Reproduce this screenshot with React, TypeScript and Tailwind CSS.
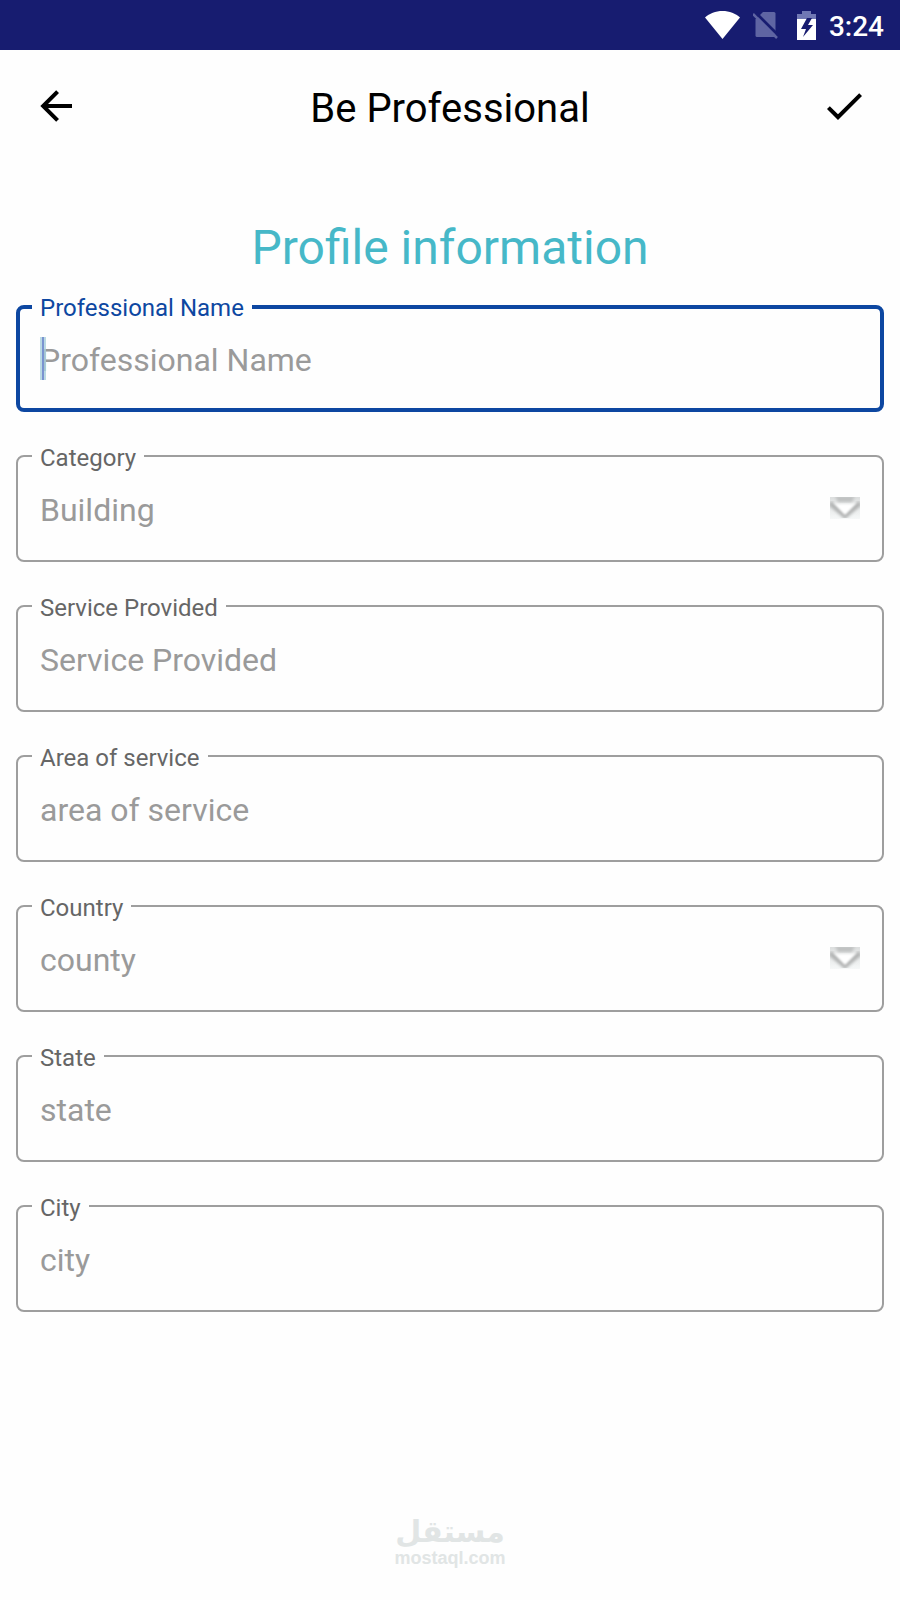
type FieldProps = {
  id: string;
  label: string;
  placeholder: string;
  focused?: boolean;
  options?: string[];
};

const fields: FieldProps[] = [
  { id: "name", label: "Professional Name", placeholder: "Professional Name", focused: true },
  { id: "category", label: "Category", placeholder: "Building", options: ["Building"] },
  { id: "service", label: "Service Provided", placeholder: "Service Provided" },
  { id: "area", label: "Area of service", placeholder: "area of service" },
  { id: "country", label: "Country", placeholder: "county", options: ["county"] },
  { id: "state", label: "State", placeholder: "state" },
  { id: "city", label: "City", placeholder: "city" },
];

function StatusBar() {
  return (
    <div className="flex h-[50px] items-center justify-end bg-[#171c70] px-4 text-white">
      <svg className="mr-3 h-7 w-9" viewBox="0 0 36 28" fill="currentColor">
        <path d="M17.500 28 0 6.500C4.500 2.500 10.500 0 17.500 0s13 2.500 17.500 6.500z" />
      </svg>
      <svg className="mr-4 h-7 w-7" viewBox="0 0 28 28">
        <path d="M10 1h11q1.500 0 1.500 1.500V26H4q-1.500 0-1.500-1.500V8.500z" fill="#5f65a3" />
        <path d="M3 2 25 24" stroke="#171c70" strokeWidth="3" />
        <path d="M0 3 24 27" stroke="#5f65a3" strokeWidth="2.500" />
      </svg>
      <svg className="mr-3 h-[29px] w-5" viewBox="-1 0 20 29">
        <path d="M4 0h9v3h5v5H-1V3h5z" fill="#7078b4" />
        <path d="M-1 8h19v21H-1z" fill="#fff" />
        <path d="M9 7 3 18h5L5 26 15 14h-5l4-7z" fill="#171c70" />
      </svg>
      <span className="pt-[3px] text-[28px] font-medium leading-8">3:24</span>
    </div>
  );
}

function Header() {
  return (
    <header className="flex items-start justify-between px-8 pt-8">
      <button type="button" aria-label="Back" className="cursor-pointer">
        <svg className="h-12 w-12" viewBox="0 0 24 24" fill="currentColor">
          <path d="M20 11v2H8l5.500 5.500-1.420 1.420L4.160 12l7.920-7.920L13.500 5.500 8 11h12z" />
        </svg>
      </button>
      <h1 className="text-[40px] leading-[54px]">Be Professional</h1>
      <button type="button" aria-label="Save" className="cursor-pointer">
        <svg className="h-12 w-12" viewBox="0 0 24 24" fill="currentColor">
          <path d="M21 7 9 19l-5.500-5.500 1.410-1.410L9 16.170 19.590 5.590 21 7z" />
        </svg>
      </button>
    </header>
  );
}

function DropdownArrow() {
  return (
    <svg className="pointer-events-none absolute right-[22px] top-[29px] h-[22px] w-[30px]" viewBox="0 0 30 22">
      <defs>
        <linearGradient id="arrowShade" x1="0" y1="0" x2="0" y2="1">
          <stop offset="0" stopColor="#dcdede" />
          <stop offset="1" stopColor="#f6f8f8" />
        </linearGradient>
        <filter id="arrowBlur">
          <feGaussianBlur stdDeviation="1.800" />
        </filter>
        <filter id="arrowSoft">
          <feGaussianBlur stdDeviation="0.800" />
        </filter>
      </defs>
      <rect width="30" height="22" fill="url(#arrowShade)" />
      <path d="M5-1h20l-3 6H8z" fill="#bfc1c1" filter="url(#arrowBlur)" />
      <path d="M0 6 15 19 30 6" fill="none" stroke="#b2b4b4" strokeWidth="5" filter="url(#arrowBlur)" />
      <path d="M3 5l6 2h12l6-2L15 18z" fill="#fff" filter="url(#arrowSoft)" />
    </svg>
  );
}

function Field({ id, label, placeholder, focused, options }: FieldProps) {
  return (
    <fieldset
      className={
        focused
          ? "h-[117px] min-w-0 rounded-lg border-4 border-[#0d47a1] px-5"
          : "h-[118px] min-w-0 rounded-lg border-2 border-[#9e9e9e] px-[22px]"
      }
    >
      <legend className={focused ? "-ml-2 px-2 pt-[2px] text-[#0d47a1]" : "-ml-2 px-2 pt-1 text-[#666]"}>
        <label htmlFor={id} className={focused ? "block text-2xl leading-[22px]" : "block text-2xl leading-5"}>
          {label}
        </label>
      </legend>
      <div
        className={
          options ? "relative -mx-[22px] px-[22px] pt-[22px]" : focused ? "relative pt-[21px]" : "relative pt-[22px]"
        }
      >
        {options ? (
          <>
            <select id={id} className="block h-10 w-full appearance-none bg-transparent text-[32px] leading-10 text-[#9a9a9a] outline-none">
              {options.map((option) => (
                <option key={option}>{option}</option>
              ))}
            </select>
            <DropdownArrow />
          </>
        ) : (
          <input
            id={id}
            type="text"
            placeholder={placeholder}
            className="block h-10 w-full bg-transparent text-[32px] leading-10 outline-none placeholder:text-[#9a9a9a]"
          />
        )}
        {focused && (
          <span className="absolute left-0 top-[18px] flex h-[43px] w-[6px] justify-center bg-[#a9cfdc]/80">
            <span className="h-full w-[2px] bg-[#7a93d0]" />
          </span>
        )}
      </div>
    </fieldset>
  );
}

export default function App() {
  return (
    <div className="flex min-h-screen flex-col bg-[#fefefe] font-['Roboto',sans-serif] text-black">
      <StatusBar />
      <Header />
      <main className="px-4">
        <h2 className="mt-[84px] text-center text-5xl leading-[56px] text-[#46b8c8]">Profile information</h2>
        <form className="mt-[19px] flex flex-col gap-8">
          {fields.map((field) => (
            <Field key={field.id} {...field} />
          ))}
        </form>
      </main>
      <footer className="mt-auto flex flex-col items-center pb-8 pt-8 font-bold text-[#e1e5e5]">
        <span lang="ar" dir="rtl" className="font-['DejaVu_Sans',sans-serif] text-3xl leading-8">مستقل</span>
        <span className="font-['Liberation_Sans',sans-serif] text-lg leading-5">mostaql.com</span>
      </footer>
    </div>
  );
}
